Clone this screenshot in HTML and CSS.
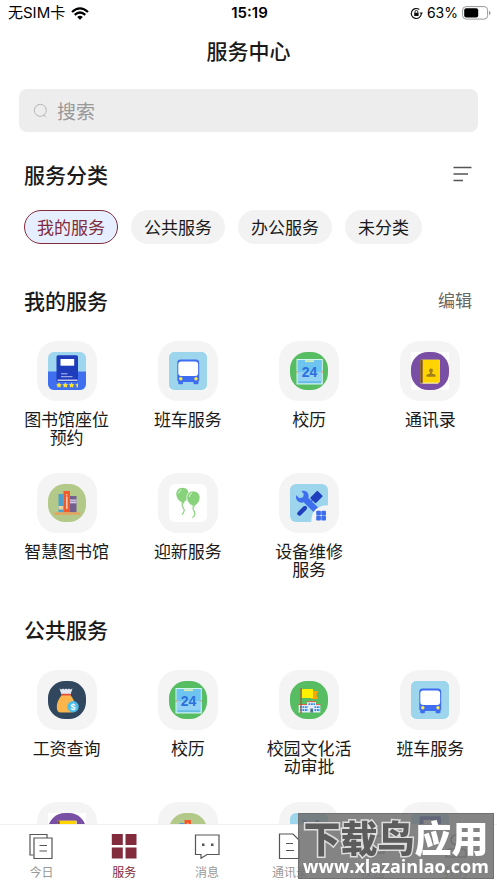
FILE: index.html
```html
<!DOCTYPE html>
<html lang="zh-CN">

<head>
    <meta charset="UTF-8">
    <meta name="viewport" content="width=device-width, initial-scale=1.0">
    <title>服务中心</title>
    <link rel="stylesheet" href="styles.css">
</head>

<body>
    <!-- service icons, used more than once -->
    <svg class="sprite" aria-hidden="true">
        <symbol id="library" viewBox="0 0 38 38">
            <rect width="38" height="38" rx="6" fill="#9dd6ee" />
            <path d="M0 19.5h38V32a6 6 0 0 1-6 6H6a6 6 0 0 1-6-6z" fill="#3f6fee" />
            <rect x="8.5" y="3.3" width="21.5" height="26.5" rx="1.5" fill="#1f3cba" />
            <rect x="12.5" y="7" width="13.7" height="6.7" fill="#fff" />
            <path d="M13 21.8h6.500M13 24.700h11.500" stroke="#d9e3ff" stroke-width=".8" />
            <path d="M9.500 28.200h20" stroke="#fff" stroke-width="1.100" />
            <g fill="#ffe52e">
                <path id="star" d="M11 30.300l.9 1.800 2 .3-1.400 1.400.3 2-1.800-1-1.800 1 .3-2-1.400-1.400 2-.3z" />
                <use href="#star" x="6.300" />
                <use href="#star" x="12.600" />
                <path d="M30 30.500v4.500l-1.600.8.300-2-1.400-1.400 2-.3z" />
            </g>
        </symbol>
        <symbol id="bus" viewBox="0 0 38 38">
            <rect width="38" height="38" fill="#fff" />
            <rect width="38" height="38" rx="5" fill="#9dd6ec" />
            <path d="M11.500 7.500h15.500q3 0 3.200 3V29h-.7v2q0 1.200-1.200 1.200h-2.600q-1.200 0-1.200-1.200v-1h-10.500v1q0 1.200-1.200 1.200h-2.500Q9.200 32.200 9.200 31v-2H8.300V10.500q.2-3 3.200-3z" fill="#3d6df0" />
            <rect x="9.300" y="9.500" width="19.800" height="14.500" rx="3" fill="#fff" />
            <circle cx="11.800" cy="26.700" r="1.700" fill="#ffe94a" />
            <circle cx="27" cy="26.700" r="1.700" fill="#ffe94a" />
        </symbol>
        <symbol id="calendar" viewBox="0 0 38 38">
            <rect width="38" height="38" rx="17" fill="#57bd62" />
            <rect x="6.500" y="7" width="26.300" height="25.500" fill="#d4f5f1" />
            <rect x="7.500" y="8" width="24.300" height="12" fill="#6dc4ef" />
            <rect x="7.500" y="20" width="24.300" height="11.500" fill="#93d2f4" />
            <rect x="8.500" y="29.300" width="22.500" height="1.600" fill="#62b8e4" />
            <rect x="15" y="8.200" width="9" height="1.900" fill="#d2edba" />
            <path d="M6.500 19l2 1-2 1zM32.800 19l-2 1 2 1z" fill="#ec8c56" />
            <text x="19.600" y="25" text-anchor="middle" class="cal-day">24</text>
        </symbol>
        <symbol id="contacts" viewBox="0 0 38 38">
            <rect width="38" height="38" fill="#fff" />
            <rect width="38" height="38" rx="17" fill="#784fa5" />
            <path d="M10.500 7.700h18.300v22l-2 2H10.500q-1.300 0-1.300-1.500V9q0-1.300 1.300-1.300z" fill="#f8edb0" />
            <path d="M10.500 7.700H28v22.800H10.500q-1.300 0-1.300-1.500V9q0-1.300 1.300-1.300z" fill="#ffd400" />
            <path d="M10.500 7.700h1.200V31.500h-1.200q-1.300 0-1.300-1.500V9q0-1.300 1.300-1.300z" fill="#77513c" />
            <circle cx="20" cy="18.500" r="2" fill="#a1801b" />
            <path d="M19 20h2v1.500l3.500 1.200v2h-9v-2l3.500-1.200z" fill="#a1801b" />
        </symbol>
        <symbol id="books" viewBox="0 0 38 38">
            <rect width="38" height="38" rx="17" fill="#b2c98a" />
            <rect x="10.500" y="10" width="5" height="18.300" fill="#4da0cc" />
            <rect x="10.500" y="22" width="5" height="3.500" fill="#ecd39b" />
            <rect x="22" y="12" width="6.500" height="16.300" fill="#73608f" />
            <rect x="22" y="15.500" width="6.500" height="3.800" fill="#d6cae5" />
            <path d="M22 17.300h6.500" stroke="#73608f" stroke-width=".6" />
            <rect x="15.500" y="7" width="6.500" height="21.300" fill="#f2592b" />
            <path d="M18.800 12.500V25" stroke="#ffd6bb" stroke-width="1.400" />
            <circle cx="18.800" cy="10.700" r=".8" fill="#ffd6bb" />
            <rect x="6.500" y="28.300" width="25.800" height="2.600" fill="#e1a660" />
        </symbol>
        <symbol id="balloons" viewBox="0 0 38 38">
            <rect width="38" height="38" rx="6" fill="#fff" />
            <path d="M13.500 3.700c3.800 0 6.200 2.900 6.200 6.300 0 4.200-3 7.200-5 8.200l1 1.300h-3.600l.8-1.400c-2.700-1-5.600-4-5.600-8.100 0-3.400 2.400-6.300 6.200-6.300z" fill="#87d27b" />
            <path d="M24.400 7c3.900 0 6.600 3 6.600 6.600 0 4.200-3 7.300-5.300 8.200l1 1.400h-4l.9-1.400c-2.800-.9-5.900-4-5.900-8.200C17.700 10 20.500 7 24.400 7z" fill="#87d27b" stroke="#fff" stroke-width=".7" />
            <path d="M9.500 9.500q.4-3 3-3.800M20 13q.3-3 3-3.800" fill="none" stroke="#e0ffda" stroke-width=".9" />
            <path d="M13.700 19.500c-2.300 2.500 1.800 4.500 1.500 7q-.2 2-2.200 4M24.500 23c-2 2.500 1.800 4 1.400 6.800q-.3 2.200-2.500 4" fill="none" stroke="#87d27b" stroke-width="1.200" />
        </symbol>
        <symbol id="repair" viewBox="0 0 38 38">
            <rect width="38" height="38" rx="6" fill="#9dd6ec" />
            <path d="M20 18.500l4-4" stroke="#3f6fee" stroke-width="1.500" />
            <rect x="21.200" y="9" width="10.500" height="8" rx="1" transform="rotate(-45 26.500 13)" fill="#1f3fbe" />
            <path d="M9.500 29.500l5-5" stroke="#1f3fbe" stroke-width="4.500" stroke-linecap="round" />
            <path d="M13 26l3.500-3.500" stroke="#1f3fbe" stroke-width="2" />
            <path d="M11.500 7.200C15 6 18.300 8.200 18.600 11.500q.1 1.300-.3 2.300L29.500 25 25 29.500 13.700 18.300c-3.500 1.200-7.200-1-7.700-4.500q-.2-1.300.2-2.500l3.300 2.900 3.500-1 .8-3.200z" fill="#3f6fee" />
            <path d="M38 21.300V38H21.300C21.300 27 27 21.300 38 21.300z" fill="#f4f4f4" />
            <g fill="#3c6deb">
                <rect x="26.200" y="26.700" width="4.700" height="4.700" rx="1" />
                <rect x="31.300" y="26.700" width="4.700" height="4.700" rx="1" />
                <rect x="26.200" y="31.800" width="4.700" height="4.700" rx="1" />
                <rect x="31.300" y="31.800" width="4.700" height="4.700" rx="1" />
            </g>
        </symbol>
        <symbol id="salary" viewBox="0 0 38 38">
            <rect width="38" height="38" rx="17" fill="#30475e" />
            <path d="M11.500 7.500l2 1 1.500-1 1.500 1 1.500-1 1.500 1 1.500-1 1.500 1 2-1-1.800 5.500h-9.400z" fill="#e3e7ef" />
            <path d="M13.700 14h8.800c2 3 4.500 6 4.500 11.500 0 4-1.500 6-4.500 6H13c-3 0-4.200-2-4.200-5C8.800 20.500 11.500 17 13.700 14z" fill="#fbb54b" />
            <rect x="13" y="12.800" width="9.800" height="1.700" rx=".8" fill="#e8503d" />
            <circle cx="25" cy="25.800" r="5.700" fill="#4fbde8" />
            <text x="25" y="28.800" text-anchor="middle" class="coin">$</text>
        </symbol>
        <symbol id="campus" viewBox="0 0 38 38">
            <rect width="38" height="38" rx="17" fill="#57bd62" />
            <path d="M20 10h8l-1.600 4 1.600 4h-7z" fill="#f9a606" />
            <rect x="11.700" y="8" width="11.300" height="9" fill="#ffef00" />
            <path d="M8.700 23.500H17v-2.800h9v2.800h4.300v8H8.700z" fill="#e4eefa" />
            <path d="M8.300 23.500H17M16.500 20.700h10M26 23.500h4.500" stroke="#e5563e" stroke-width=".9" />
            <path d="M10 26.200h8M10 29h8M24.500 26.200H30M24.500 29H30M18.500 23.200h6.500" stroke="#2b8dea" stroke-width="1.800" stroke-dasharray="1.800 .7" />
            <rect x="20.300" y="27.500" width="2.800" height="4" fill="#54708d" />
            <path d="M11 7v25.500" stroke="#9a5c3d" stroke-width="1.300" />
        </symbol>
    </svg>

    <header>
        <div class="status-bar">
            <div class="carrier">
                <span>无SIM卡</span>
                <svg width="18" height="13" viewBox="0 0 18 13" fill="none" stroke="#000" stroke-width="2.300">
                    <path d="M1 5Q9-2.200 17 5M3.700 7.800q5.300-4.500 10.600 0" />
                    <path d="M9 12.700L6.200 9.900q2.800-2.200 5.600 0z" fill="#000" stroke="none" />
                </svg>
            </div>
            <time>15:19</time>
            <div class="battery">
                <svg width="13" height="13" viewBox="0 0 13 13">
                    <path d="M11.300 6.500a5 5 0 1 1-2-4" fill="none" stroke="#111" stroke-width="1.100" />
                    <path d="M9.600 5.400h3.300l-1.600 2.400z" fill="#111" />
                    <rect x="4.200" y="5.800" width="4.400" height="3.200" fill="#111" />
                    <path d="M5 6V4.800a1.400 1.400 0 0 1 2.800 0V6" fill="none" stroke="#111" stroke-width=".9" />
                </svg>
                <span>63%</span>
                <svg width="29" height="14" viewBox="0 0 29 14">
                    <rect x=".6" y=".6" width="25" height="12.500" rx="3.500" fill="none" stroke="#999" />
                    <rect x="2.200" y="2.200" width="14" height="9.300" rx="2" />
                    <path d="M27 4.700q1.600.8 1.600 2.200T27 9.100z" fill="#999" />
                </svg>
            </div>
        </div>
        <h1>服务中心</h1>
    </header>

    <main>
        <form class="search">
            <svg width="16" height="16" viewBox="0 0 16 16" fill="none" stroke="#b8b8b8">
                <circle cx="7.300" cy="7.300" r="6" />
                <path d="M10.500 11.500l2.500 2.700" />
            </svg>
            <input type="search" placeholder="搜索" aria-label="搜索">
        </form>

        <div class="section-head">
            <h2>服务分类</h2>
            <button type="button" class="sort" aria-label="排序">
                <svg width="19" height="16" viewBox="0 0 19 16" stroke="#555" stroke-width="1.400">
                    <path d="M.5 1.500h18M.5 8H15M.5 14.500H10" />
                </svg>
            </button>
        </div>
        <div class="filters">
            <button type="button" class="active">我的服务</button>
            <button type="button">公共服务</button>
            <button type="button">办公服务</button>
            <button type="button">未分类</button>
        </div>

        <div class="section-head">
            <h2>我的服务</h2>
            <button type="button" class="edit">编辑</button>
        </div>
        <div class="services">
            <a href="#"><span class="tile"><svg><use href="#library" /></svg></span><span class="name">图书馆座位预约</span></a>
            <a href="#"><span class="tile"><svg><use href="#bus" /></svg></span><span class="name">班车服务</span></a>
            <a href="#"><span class="tile"><svg><use href="#calendar" /></svg></span><span class="name">校历</span></a>
            <a href="#"><span class="tile"><svg><use href="#contacts" /></svg></span><span class="name">通讯录</span></a>
            <a href="#"><span class="tile"><svg><use href="#books" /></svg></span><span class="name">智慧图书馆</span></a>
            <a href="#"><span class="tile"><svg><use href="#balloons" /></svg></span><span class="name">迎新服务</span></a>
            <a href="#"><span class="tile"><svg><use href="#repair" /></svg></span><span class="name">设备维修<br>服务</span></a>
        </div>

        <div class="section-head">
            <h2>公共服务</h2>
        </div>
        <div class="services">
            <a href="#"><span class="tile"><svg><use href="#salary" /></svg></span><span class="name">工资查询</span></a>
            <a href="#"><span class="tile"><svg><use href="#calendar" /></svg></span><span class="name">校历</span></a>
            <a href="#"><span class="tile"><svg><use href="#campus" /></svg></span><span class="name">校园文化活动审批</span></a>
            <a href="#"><span class="tile"><svg><use href="#bus" /></svg></span><span class="name">班车服务</span></a>
            <a href="#" aria-label="通讯录"><span class="tile"><svg><use href="#contacts" /></svg></span></a>
            <a href="#" aria-label="智慧图书馆"><span class="tile"><svg><use href="#books" /></svg></span></a>
            <a href="#" aria-label="设备维修服务"><span class="tile"><svg><use href="#repair" /></svg></span></a>
            <a href="#" aria-label="图书馆座位预约"><span class="tile"><svg><use href="#library" /></svg></span></a>
        </div>
    </main>

    <nav class="tabs">
        <a href="#">
            <svg viewBox="0 0 26 26">
                <path d="M5.500 22H2V1.500h17V5" />
                <path d="M6 5h18v20.500H6zM11.500 12.500H19M11.500 18H19" />
            </svg>
            <span>今日</span>
        </a>
        <a href="#" class="current">
            <svg viewBox="0 0 26 26">
                <path d="M.8 1h11v11h-11zM14.500 1h11v11h-11zM.8 14.500h11v11h-11zM14.500 14.500h11v11h-11z" />
            </svg>
            <span>服务</span>
        </a>
        <a href="#">
            <svg viewBox="0 0 26 26">
                <path d="M1.500 2h23.500v19.500H13l-6 3.800v-3.800H1.500z" />
                <path d="M8 11.800h2.500M17 11.800h2.500" stroke-width="2.400" />
            </svg>
            <span>消息</span>
        </a>
        <a href="#">
            <svg viewBox="0 0 26 26">
                <path d="M2.500 1h13.500l6 6v18.500h-19.500zM9 10.500h7M9 17.500h8" />
            </svg>
            <span>通讯录</span>
        </a>
        <a href="#">
            <svg viewBox="0 0 26 26">
                <path d="M2 3h22v17h-8l-3 4-3-4H2z" />
            </svg>
            <span>校园</span>
        </a>
        <a href="#">
            <svg viewBox="0 0 26 26">
                <circle cx="13" cy="7" r="5" />
                <path d="M3 24v-4q0-4 4-4h12q4 0 4 4v4z" />
            </svg>
            <span>我的</span>
        </a>
    </nav>

    <div class="watermark">
        <div class="brand">下载鸟<b>应用</b></div>
        <div class="site">www.xlazainlao.com</div>
    </div>
</body>

</html>
```
FILE: styles.css
```css
* {
    box-sizing: border-box;
}

body {
    margin: 0;
    height: 100vh;
    display: flex;
    flex-direction: column;
    background-color: #fff;
    color: #1a1a1a;
    font-family: "Noto Sans CJK SC", sans-serif;
}

button {
    border: none;
    padding: 0;
    background: none;
    font-family: inherit;
    cursor: pointer;
}

a {
    color: inherit;
    text-decoration: none;
}

svg {
    display: block;
}

.sprite {
    position: absolute;
    width: 0;
    height: 0;
}

.status-bar {
    display: grid;
    grid-template-columns: 1fr auto 1fr;
    align-items: center;
    height: 26px;
    padding: 0 6px 0 8px;
    color: #000;
    font-family: Inter, "Noto Sans CJK SC", sans-serif;
    font-size: 15px;
    line-height: 20px;
}

.status-bar time {
    font-weight: 600;
}

.carrier,
.battery {
    display: flex;
    align-items: center;
    gap: 6px;
}

.battery {
    justify-content: flex-end;
    gap: 4px;
    font-size: 14px;
}

h1,
h2 {
    margin: 0;
    font-size: 21px;
    font-weight: 500;
    line-height: 30px;
}

h1 {
    padding: 9px 0 24px;
    text-align: center;
}

main {
    flex: 1;
    min-height: 0;
    overflow-y: auto;
    scrollbar-width: none;
}

.search {
    display: flex;
    align-items: center;
    gap: 8px;
    height: 43px;
    margin: 0 19px;
    padding: 0 14px;
    border-radius: 8px;
    background-color: #ededed;
}

.search input {
    flex: 1;
    min-width: 0;
    padding: 0;
    border: none;
    outline: none;
    background: none;
    font-family: inherit;
    font-size: 19px;
}

.search input::placeholder {
    color: #999;
}

.section-head {
    display: flex;
    align-items: center;
    justify-content: space-between;
    padding: 27px 25px 21px 24px;
}

.edit {
    color: #666;
    font-size: 17px;
    line-height: 24px;
}

.filters {
    display: flex;
    gap: 13px;
    padding: 0 24px 14px;
}

.filters button {
    height: 34px;
    padding: 0 12px;
    border: 1px solid #f2f2f2;
    border-radius: 17px;
    background-color: #f2f2f2;
    color: #1a1a1a;
    font-size: 17px;
    line-height: 24px;
}

.filters .active {
    border-color: #822b3c;
    background-color: #e6efff;
    color: #822b3c;
}

.services {
    display: grid;
    grid-template-columns: repeat(4, 1fr);
    row-gap: 27px;
    padding: 5px 6px 9px;
}

.services a {
    display: flex;
    flex-direction: column;
    align-items: center;
    gap: 9px;
}

.tile {
    display: grid;
    place-items: center;
    width: 60px;
    height: 60px;
    border-radius: 20px;
    background-color: #f4f4f4;
}

.tile svg {
    width: 38px;
    height: 38px;
}

.name {
    width: 86px;
    font-size: 17px;
    line-height: 18px;
    text-align: center;
}

.cal-day {
    fill: #2d6fdc;
    font: bold 14px "Liberation Sans", sans-serif;
}

.coin {
    fill: #fff;
    font: bold 9px "Liberation Sans", sans-serif;
}

.tabs {
    display: grid;
    grid-template-columns: repeat(6, 1fr);
    height: 59px;
    padding-top: 8px;
    border-top: 1px solid #f0f0f0;
    background-color: #fff;
    color: #999;
    font-size: 12px;
    line-height: 18px;
}

.tabs a {
    display: flex;
    flex-direction: column;
    align-items: center;
    gap: 4px;
}

.tabs svg {
    width: 26px;
    height: 26px;
    fill: none;
    stroke: #555;
    stroke-width: 1.2;
}

.tabs .current {
    color: #822b3c;
}

.tabs .current svg {
    fill: #822b3c;
    stroke: none;
}

.watermark {
    position: fixed;
    right: 3px;
    bottom: 4px;
    width: 196px;
    height: 66px;
    border: 1px solid #707070;
    background-color: rgba(110, 110, 110, 0.85);
    color: #fff;
    text-align: center;
    white-space: nowrap;
    pointer-events: none;
}

.brand {
    padding-top: 2px;
    color: #5c5c5c;
    font-size: 37px;
    font-weight: 900;
    line-height: 42px;
    -webkit-text-stroke: 3px #ddd;
    paint-order: stroke fill;
}

.brand b {
    color: #fff;
    font-weight: 900;
    -webkit-text-stroke: 0;
}

.site {
    font-family: "Open Sans", sans-serif;
    font-size: 18px;
    font-weight: bold;
    line-height: 16px;
}
```
